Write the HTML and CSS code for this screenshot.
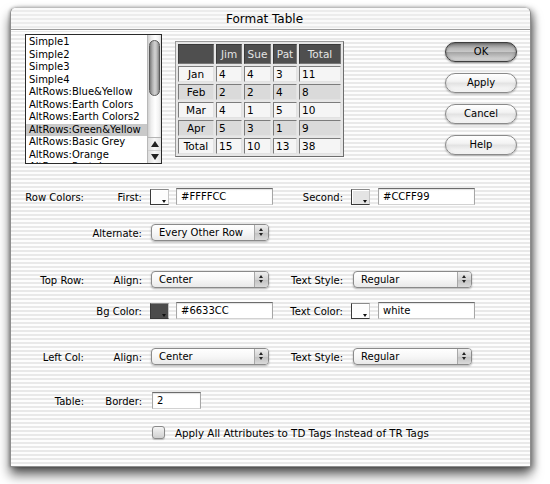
FILE: index.html
```html
<!DOCTYPE html>
<html>
<head>
<meta charset="utf-8">
<title>Format Table</title>
<link rel="stylesheet" href="styles.css">
</head>
<body>
<div class="window">
  <div class="titlebar">Format Table</div>
  <div class="content">
    <div class="top">
      <div class="listbox">
        <ul class="items">
          <li>Simple1</li>
          <li>Simple2</li>
          <li>Simple3</li>
          <li>Simple4</li>
          <li>AltRows:Blue&amp;Yellow</li>
          <li>AltRows:Earth Colors</li>
          <li>AltRows:Earth Colors2</li>
          <li class="sel">AltRows:Green&amp;Yellow</li>
          <li>AltRows:Basic Grey</li>
          <li>AltRows:Orange</li>
          <li>AltRows:Pastels</li>
        </ul>
        <div class="scrollbar">
          <div class="track"><div class="thumb"></div></div>
          <div class="sarrow"><svg width="8" height="6" viewBox="0 0 8 6"><path d="M4 0 L8 6 L0 6 Z" fill="#222"/></svg></div>
          <div class="sarrow down"><svg width="8" height="6" viewBox="0 0 8 6"><path d="M0 0 L8 0 L4 6 Z" fill="#222"/></svg></div>
        </div>
      </div>

      <div class="preview">
        <table class="sample">
          <colgroup><col class="c0"><col class="c1"><col class="c2"><col class="c3"><col class="c4"></colgroup>
          <tr class="head"><th></th><th>Jim</th><th>Sue</th><th>Pat</th><th>Total</th></tr>
          <tr><td class="lead">Jan</td><td>4</td><td>4</td><td>3</td><td>11</td></tr>
          <tr class="alt"><td class="lead">Feb</td><td>2</td><td>2</td><td>4</td><td>8</td></tr>
          <tr><td class="lead">Mar</td><td>4</td><td>1</td><td>5</td><td>10</td></tr>
          <tr class="alt"><td class="lead">Apr</td><td>5</td><td>3</td><td>1</td><td>9</td></tr>
          <tr><td class="lead">Total</td><td>15</td><td>10</td><td>13</td><td>38</td></tr>
        </table>
      </div>

      <div class="buttons">
        <button class="btn default">OK</button>
        <button class="btn">Apply</button>
        <button class="btn">Cancel</button>
        <button class="btn">Help</button>
      </div>
    </div>

    <div class="form">
      <div class="row r1">
        <span class="ga">Row Colors:</span>
        <span class="lb">First:</span>
        <span class="ctl"><span class="swatch"></span><span class="field">#FFFFCC</span></span>
        <span class="lb2">Second:</span>
        <span class="ctl2"><span class="swatch light"></span><span class="field">#CCFF99</span></span>
      </div>
      <div class="row r2">
        <span class="ga"></span>
        <span class="lb">Alternate:</span>
        <span class="ctl"><span class="popup">Every Other Row<span class="parrow"></span></span></span>
      </div>
      <div class="row r3">
        <span class="ga">Top Row:</span>
        <span class="lb">Align:</span>
        <span class="ctl"><span class="popup">Center<span class="parrow"></span></span></span>
        <span class="lb2">Text Style:</span>
        <span class="ctl2"><span class="popup">Regular<span class="parrow"></span></span></span>
      </div>
      <div class="row r4">
        <span class="ga"></span>
        <span class="lb">Bg Color:</span>
        <span class="ctl"><span class="swatch dark"></span><span class="field">#6633CC</span></span>
        <span class="lb2">Text Color:</span>
        <span class="ctl2"><span class="swatch"></span><span class="field">white</span></span>
      </div>
      <div class="row r5">
        <span class="ga">Left Col:</span>
        <span class="lb">Align:</span>
        <span class="ctl"><span class="popup">Center<span class="parrow"></span></span></span>
        <span class="lb2">Text Style:</span>
        <span class="ctl2"><span class="popup">Regular<span class="parrow"></span></span></span>
      </div>
      <div class="row r6">
        <span class="ga">Table:</span>
        <span class="lb">Border:</span>
        <span class="ctl"><span class="field small">2</span></span>
      </div>
      <div class="row r7">
        <span class="ga"></span>
        <span class="lb"></span>
        <span class="ctl wide"><span class="check"></span><span class="checklabel">Apply All Attributes to TD Tags Instead of TR Tags</span></span>
      </div>
    </div>
  </div>
</div>
</body>
</html>
```

FILE: styles.css
```css
* { box-sizing: border-box; margin: 0; padding: 0; }
html, body { width: 550px; height: 484px; background: #fff; overflow: hidden; }
body { font-family: "DejaVu Sans", sans-serif; font-size: 10px; color: #000; }

.window {
  margin: 7px 0 0 10px;
  width: 521px;
  height: 460px;
  border: 1px solid #8e8e8e;
  border-top-color: #bdbdbd;
  border-radius: 6px 6px 0 0;
  background: repeating-linear-gradient(to bottom, #fdfdfd 0 2px, #e9e9e9 2px 4px);
  box-shadow: 0 8px 12px rgba(0,0,0,.6), 3px 2px 6px rgba(0,0,0,.3), -1px 0 3px rgba(0,0,0,.2);
  overflow: hidden;
  display: flex;
  flex-direction: column;
}

.titlebar {
  height: 22px;
  flex: none;
  border-bottom: 1px solid #9c9c9c;
  box-shadow: 0 1px 0 #fff;
  display: flex;
  align-items: center;
  justify-content: center;
  padding: 1px 12px 0 0;
  font-size: 12px;
  color: #000;
  background: repeating-linear-gradient(to bottom, #fafafa 0 2px, #ececec 2px 4px);
}

.content { padding: 4px 13px 0 14px; }

.top { display: flex; align-items: flex-start; height: 130px; }

/* list box */
.listbox {
  width: 137px;
  height: 130px;
  border: 1px solid #2a2a2a;
  background: #fff;
  display: flex;
  overflow: hidden;
  flex: none;
}
.items {
  list-style: none;
  width: 121px;
  padding-top: 1px;
  overflow: hidden;
}
.items li {
  height: 12.5px;
  line-height: 12.5px;
  padding-left: 3px;
  white-space: nowrap;
  font-size: 10px;
}
.items li.sel { background: #c9c9c9; }

.scrollbar {
  width: 14px;
  display: flex;
  flex-direction: column;
  border-left: 1px solid #b8b8b8;
}
.track {
  flex: 1;
  padding: 5px 1px 0 1px;
  background: linear-gradient(to right, #d0d0d0, #eeeeee 25%, #ffffff 55%, #f2f2f2 85%, #dadada);
}
.thumb {
  height: 56px;
  border: 1px solid #5a5a5a;
  border-radius: 6px;
  background: linear-gradient(to right, #7c7c7c, #b4b4b4 30%, #d2d2d2 55%, #bcbcbc 75%, #858585);
}
.sarrow {
  height: 13px;
  display: flex;
  align-items: center;
  justify-content: center;
  border-top: 1px solid #b5b5b5;
  background: linear-gradient(to right, #dcdcdc, #f8f8f8 50%, #e2e2e2);
}
.sarrow.down { border-top-color: #d0d0d0; }

/* preview table */
.preview { margin: 7px 0 0 13px; flex: none; }
.sample {
  border-collapse: separate;
  border-spacing: 2px;
  table-layout: fixed;
  width: 169px;
  border: 1px solid;
  border-color: #9a9a9a #6e6e6e #6e6e6e #9a9a9a;
  background: #e6e6e6;
  font-size: 10.5px;
}
.c0 { width: 36px; } .c1 { width: 26px; } .c2 { width: 27px; } .c3 { width: 24px; } .c4 { width: 42px; }
.sample th {
  height: 20px;
  background: #4f4f4f;
  color: #e4e4e4;
  font-weight: normal;
  text-align: center;
  border: 1px solid;
  border-color: #3a3a3a #777 #777 #3a3a3a;
}
.sample td {
  height: 16px;
  padding: 0 0 0 2px;
  background: #f5f5f5;
  border: 1px solid;
  border-color: #7c7c7c #e2e2e2 #e2e2e2 #7c7c7c;
  text-align: left;
  line-height: 13px;
}
.sample td.lead { text-align: center; padding: 0; }
.sample tr.alt td { background: #dadada; }

/* buttons */
.buttons {
  margin: 8px 0 0 auto;
  display: flex;
  flex-direction: column;
  gap: 11px;
  flex: none;
}
.btn {
  width: 72px;
  height: 20px;
  border-radius: 10px;
  border: 1px solid #8a8a8a;
  font-family: "DejaVu Sans", sans-serif;
  font-size: 10px;
  color: #000;
  background: linear-gradient(to bottom, #ffffff 0%, #f3f3f3 40%, #e3e3e3 52%, #f4f4f4 80%, #ffffff 100%);
  box-shadow: 0 1px 2px rgba(0,0,0,.3), inset 0 -2px 3px rgba(0,0,0,.06);
  padding-bottom: 1px;
}
.btn.default {
  border-color: #3e3e3e;
  background: linear-gradient(to bottom, #7d7d7d 0%, #b9b9b9 30%, #c8c8c8 48%, #a5a5a5 52%, #c6c6c6 80%, #e2e2e2 100%);
  box-shadow: 0 1px 2px rgba(0,0,0,.4), inset 0 0 3px rgba(0,0,0,.35);
}

/* form */
.form { margin-top: 24px; }
.row { display: flex; align-items: center; height: 17px; }
.r2 { margin-top: 19px; }
.r3 { margin-top: 30px; }
.r4 { margin-top: 14px; }
.r5 { margin-top: 29px; }
.r6 { margin-top: 27px; }
.r7 { margin-top: 15px; }

.ga, .lb, .lb2 { text-align: right; white-space: nowrap; padding-top: 2px; flex: none; }
.ga { width: 59px; }
.lb { width: 58px; }
.lb2 { width: 70px; }
.ctl { width: 131px; padding-left: 8px; display: flex; align-items: center; gap: 7px; flex: none; }
.ctl.wide { width: auto; gap: 10px; }
.ctl2 { padding-left: 8px; display: flex; align-items: center; gap: 8px; flex: none; }

.swatch {
  position: relative;
  width: 19px;
  height: 16px;
  flex: none;
  background: #fdfdfd;
  border: 1px solid;
  border-color: #8a8a8a #c4c4c4 #3a3a3a #3a3a3a;
  box-shadow: inset 1px 1px 0 #fff;
}
.swatch.light { background: #e4e4e4; }
.swatch.dark { background: #4c4c4c; box-shadow: none; }
.swatch::after {
  content: "";
  position: absolute;
  right: 2px;
  bottom: 1px;
  border-left: 2.5px solid transparent;
  border-right: 2.5px solid transparent;
  border-top: 3px solid #111;
}

.field {
  width: 97px;
  height: 17px;
  flex: none;
  background: #fff;
  border: 1px solid;
  border-color: #6c6c6c #a6a6a6 #d2d2d2 #a6a6a6;
  box-shadow: inset 0 1px 1px rgba(0,0,0,.12);
  padding: 1px 0 0 4px;
  line-height: 14px;
  white-space: nowrap;
}
.field.small { width: 49px; margin-left: 2px; }

.popup {
  position: relative;
  width: 118px;
  height: 17px;
  flex: none;
  margin-left: 1px;
  border: 1px solid #8a8a8a;
  border-radius: 4px;
  background: linear-gradient(to bottom, #ffffff, #f7f7f7 50%, #e9e9e9 100%);
  box-shadow: 0 1px 2px rgba(0,0,0,.3);
  padding-left: 7px;
  line-height: 14px;
  white-space: nowrap;
  display: flex;
  align-items: center;
}
.ctl2 .popup { margin-left: 2px; width: 119px; }
.parrow {
  margin-left: auto;
  width: 14px;
  height: 100%;
  border-left: 1px solid #a8a8a8;
  border-radius: 0 3px 3px 0;
  background: linear-gradient(to bottom, #eeeeee, #d2d2d2 50%, #c2c2c2 52%, #dadada);
  position: relative;
}
.parrow::before, .parrow::after {
  content: "";
  position: absolute;
  left: 4px;
  border-left: 2.5px solid transparent;
  border-right: 2.5px solid transparent;
}
.parrow::before { top: 3px; border-bottom: 3px solid #222; }
.parrow::after { top: 8px; border-top: 3px solid #222; }

.check {
  width: 13px;
  height: 13px;
  flex: none;
  margin-left: 2px;
  border: 1px solid #8a8a8a;
  border-radius: 3px;
  background: linear-gradient(to bottom, #f4f4f4, #e0e0e0 55%, #d0d0d0);
  box-shadow: 0 1px 1px rgba(0,0,0,.2);
}
.checklabel { white-space: nowrap; font-size: 10.3px; padding-top: 1px; }
```
